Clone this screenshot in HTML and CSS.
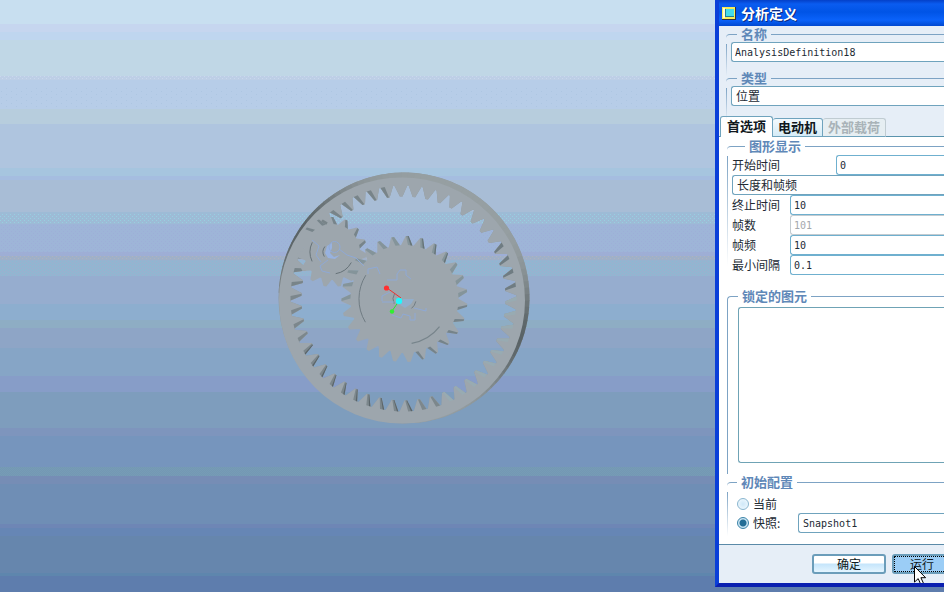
FILE: index.html
```html
<!DOCTYPE html>
<html lang="zh-CN">
<head>
<meta charset="utf-8">
<title>分析定义</title>
<link rel="stylesheet" href="styles.css">
</head>
<body>
<main class="workspace">
  <section class="viewport" aria-label="模型">
    <svg class="scene" viewBox="0 0 715 592" preserveAspectRatio="xMinYMin slice">
      <defs>
        <pattern id="mist" width="4" height="4" patternUnits="userSpaceOnUse">
          <path d="M0 0h1v1h-1zM2 2h1v1h-1z" fill="#cbd7ee"/>
        </pattern>
        <pattern id="aqua" width="4" height="4" patternUnits="userSpaceOnUse">
          <path d="M0 0h1v1h-1zM2 2h1v1h-1z" fill="#98cfe0"/>
        </pattern>
        <pattern id="violet" width="4" height="4" patternUnits="userSpaceOnUse">
          <path d="M1 1h1v1h-1zM3 3h1v1h-1z" fill="#9eaed8"/>
        </pattern>
        <pattern id="sand" width="4" height="4" patternUnits="userSpaceOnUse">
          <path d="M0 0h1v1h-1zM2 2h1v1h-1z" fill="#aeb2c0"/>
        </pattern>
        <pattern id="teal" width="4" height="3" patternUnits="userSpaceOnUse">
          <path d="M0 0h1v1h-1zM2 2h1v1h-1z" fill="#8abbd2"/>
        </pattern>
        <pattern id="moss" width="2" height="2" patternUnits="userSpaceOnUse">
          <path d="M0 0h1v1h-1zM1 1h1v1h-1z" fill="#769db5"/>
        </pattern>
        <pattern id="sky" width="10" height="6" patternUnits="userSpaceOnUse">
          <path d="M1 1h1v1h-1zM6 4h1v1h-1z" fill="#adc6e2"/>
        </pattern>
      </defs>
      <g shape-rendering="crispEdges">
        <rect y="76" width="715" height="4" fill="url(#mist)"/>
        <rect y="88" width="715" height="21" fill="url(#sky)"/>
        <rect y="213" width="715" height="11" fill="url(#aqua)"/>
        <rect y="225" width="715" height="31" fill="url(#violet)"/>
        <rect y="256" width="715" height="4" fill="url(#sand)"/>
        <rect y="261" width="715" height="15" fill="url(#teal)"/>
        <rect y="467" width="715" height="9" fill="url(#moss)"/>
      </g>
      <g id="gears"></g>
    </svg>
  </section>

  <form class="dialog" onsubmit="return false">
    <header class="titlebar">
      <svg class="app-icon" viewBox="0 0 14 13" aria-hidden="true">
        <path d="M0 0h14v13H0z" fill="#2a3040"/>
        <path d="M0 0h13v12H0z" fill="#f6ec58"/>
        <path d="M1 1h2v10H1z" fill="#fffbd0"/>
        <path d="M3 2h9v8H3z" fill="#1e7f96"/>
        <path d="M4 2h8v7H4z" fill="#43dcea"/>
      </svg>
      <h1>分析定义</h1>
    </header>

    <div class="top-fields">
      <fieldset class="group">
        <legend><label for="name">名称</label></legend>
        <input id="name" class="field mono" value="AnalysisDefinition18">
      </fieldset>
      <fieldset class="group">
        <legend><label for="type">类型</label></legend>
        <select id="type" class="field"><option>位置</option></select>
      </fieldset>
    </div>

    <nav class="tabs" role="tablist">
      <button type="button" role="tab" aria-selected="true" class="tab active">首选项</button>
      <button type="button" role="tab" class="tab">电动机</button>
      <button type="button" role="tab" class="tab" disabled>外部载荷</button>
    </nav>

    <div class="panel">
      <fieldset class="group display">
        <legend>图形显示</legend>
        <div class="row start"><label for="start">开始时间</label><input id="start" class="field mono" value="0"></div>
        <select class="field mode" aria-label="模式"><option>长度和帧频</option></select>
        <div class="row"><label for="end">终止时间</label><input id="end" class="field mono" value="10"></div>
        <div class="row"><label for="count">帧数</label><input id="count" class="field mono" value="101" disabled></div>
        <div class="row"><label for="rate">帧频</label><input id="rate" class="field mono" value="10"></div>
        <div class="row"><label for="step">最小间隔</label><input id="step" class="field mono" value="0.1"></div>
      </fieldset>

      <fieldset class="group locked">
        <legend>锁定的图元</legend>
        <div class="list" role="listbox" aria-label="锁定的图元"></div>
      </fieldset>

      <fieldset class="group initial">
        <legend>初始配置</legend>
        <label class="choice"><input type="radio" name="init">当前</label>
        <div class="snapshot">
          <label class="choice"><input type="radio" name="init" checked>快照:</label>
          <input class="field mono" aria-label="快照" value="Snapshot1">
        </div>
      </fieldset>
    </div>

    <footer class="actions">
      <button type="button" class="btn">确定</button>
      <button type="button" class="btn run">运行
        <svg class="pointer" viewBox="0 0 12 20" aria-hidden="true">
          <path d="M.5 .5v15.600l3.700-3.500 3 6.800 2.700-1.200-3-6.500h4.700z" fill="#fff" stroke="#000"/>
        </svg>
      </button>
    </footer>
  </form>
</main>
<script src="gears.js"></script>
</body>
</html>
```
FILE: styles.css
```css
* { box-sizing: border-box; }

body {
  margin: 0;
  padding: 0 2px 3px 0;
  background: #fff;
  font: 12px/16px "Noto Sans CJK SC", sans-serif;
  color: #222a33;
  overflow: hidden;
}

.workspace {
  display: flex;
  align-items: flex-start;
  min-height: calc(100vh - 3px);
  background: linear-gradient(
    #c8dff0 24px, #c6d6ef 24px 32px, #bfd6ef 32px 40px, #c0d7e6 40px 76px,
    #bdcfe6 76px 80px, #b7cde8 80px 109px, #b7cddd 109px 124px, #afc5df 124px 168px,
    #a6c5df 168px 176px, #a5bde0 176px 180px, #a8bdd6 180px 212px, #9dbbd6 212px 224px,
    #9eb5d8 224px 252px, #9eaed5 252px 256px, #9fb0c8 256px 260px, #96b3d0 260px 276px,
    #96adcf 276px 304px, #8daecf 304px 320px, #8eadc4 320px 328px, #8ea5c6 328px 348px,
    #86a5c6 348px 376px, #879dc8 376px 392px, #7e9dbd 392px 428px, #7e95bd 428px 436px,
    #7695bd 436px 467px, #7497b4 467px 476px, #768db5 476px 484px, #6f8eb5 484px 524px,
    #6e86b5 524px 528px, #6686b5 528px 536px, #6686ad 536px 573px, #5e86ad 573px 576px,
    #5e7dad 576px);
}

.viewport { flex: 1; min-width: 0; align-self: stretch; }
.scene { display: block; width: 100%; }

.dialog {
  flex: 0 0 229px;
  border: solid #0a3fd8;
  border-width: 0 0 4px 4px;
  border-color: #0a1fb0 #0a3fd8 #0a1fb0 #0a3fd8;
  background: #e6eef7;
  overflow: hidden;
}

.titlebar {
  display: flex;
  align-items: center;
  gap: 5px;
  height: 26px;
  padding-left: 3px;
  background: linear-gradient(#0440c8, #0a5cf0 4px, #0054e6 12px, #0a62fa 20px, #0048d0);
}
.titlebar h1 {
  margin: 0;
  font-size: 14px;
  line-height: 20px;
  font-weight: 700;
  color: #fff;
  text-shadow: 1px 1px 0 #0a2a80;
}
.app-icon { width: 14px; height: 13px; }

.group {
  position: relative;
  min-width: 0;
  margin: 0;
  padding: 0;
  border: 1px solid #7da3c4;
  border-width: 1px 0 0 1px;
  border-radius: 4px 0 0 0;
}
.group legend {
  padding: 0 4px;
  font-size: 13px;
  line-height: 16px;
  font-weight: 700;
  color: #5f88b8;
}

.top-fields { padding-left: 7px; }
.top-fields .group { height: 44px; padding-left: 5px; border-left: 0; }
.top-fields legend { margin-left: 6px; }

.field {
  display: block;
  width: 100%;
  min-width: 0;
  height: 20px;
  margin: 0;
  padding: 0 4px;
  border: 1px solid #6fa3bd;
  border-right: 0;
  border-radius: 3px 0 0 3px;
  background: #fff;
  color: #222a33;
  font: 12px/16px "Noto Sans CJK SC", sans-serif;
  appearance: none;
  outline: 0;
}
.field.mono { padding: 0 3px; font-family: "DejaVu Sans Mono", monospace; font-size: 10px; }
.field:disabled { border-color: #c3cbd0; color: #a4a8ac; }
.snapshot .field.mono { padding-left: 4px; }

.tabs {
  display: flex;
  align-items: flex-end;
  height: 23px;
  padding-left: 1px;
  box-shadow: inset 0 -1px #5a93ad;
}
.tab {
  height: 19px;
  padding: 0 5px 2px;
  border: 1px solid #6fa3bd;
  border-left-width: 0;
  border-radius: 3px 3px 0 0;
  background: linear-gradient(#f4fafe, #d5ecf7);
  font: 700 13px/16px "Noto Sans CJK SC", sans-serif;
  color: #101820;
}
.tab.active { height: 21px; padding: 0 6px 2px; border-width: 1px 1px 0; background: #fff; }
.tab:disabled { padding: 0 5px 2px; border-color: #c0ccd2 #c0ccd2 #6fa3bd; background: #e6eef2; color: #a9b3b8; }

.panel {
  padding: 1px 0 0 8px;
  background: #fff;
  border-bottom: 1px solid #5a8aa8;
}

.display { height: 150px; padding: 1px 0 0 5px; border-left: 0; }
.top-fields .group::before,
.display::before,
.initial::before {
  content: "";
  position: absolute;
  left: 0;
  top: 2px;
  width: 1px;
  height: 110px;
  background: linear-gradient(#7da3c4, transparent);
}
.top-fields .group::before { height: 32px; }
.display legend { margin-left: 13px; }
.row { display: grid; grid-template-columns: 58px 1fr; align-items: center; height: 20px; }
.row.start { grid-template-columns: 104px 1fr; }
.row .field { border-color: #6fb0cf; }
.row .field:disabled { border-color: #c3cbd0; }

.locked { height: 186px; padding: 3px 0 0 10px; }
.list { height: 156px; border: 1px solid #6fa3b5; border-right: 0; border-radius: 3px 0 0 3px; background: #fff; }

.initial { height: 70px; padding: 5px 0 0 10px; border-left: 0; }
.initial::before { height: 44px; }
.locked legend,
.initial legend { margin-left: 0; }
.choice { display: flex; align-items: center; gap: 4px; height: 18px; }
.choice input {
  width: 12px;
  height: 12px;
  margin: 0;
  border: 1px solid #8ab6cf;
  border-radius: 50%;
  background: radial-gradient(#cfe8f8, #f4fbff);
  appearance: none;
}
.choice input:checked { border-color: #3b83a8; background: radial-gradient(#246e96 0 3px, #cbe6f4 4px); }
.snapshot { display: grid; grid-template-columns: 61px 1fr; align-items: center; height: 18px; }

.actions { display: flex; gap: 6px; height: 38px; padding: 9px 0 0 93px; }
.btn {
  position: relative;
  flex: 0 0 74px;
  height: 20px;
  padding: 0;
  border: 2px solid #6b9dba;
  border-radius: 3px;
  background: linear-gradient(#fff 0 7px, #c5e5fb 8px, #e4f5ff);
  font: 12px/16px "Noto Sans CJK SC", sans-serif;
  color: #101820;
}
.btn.run { flex-basis: 60px; background: #9bcdf6; outline: 1px dotted #000; outline-offset: -3px; }
.pointer { position: absolute; left: 20px; top: 10px; width: 12px; height: 20px; }
```
FILE: gears.js
```js
const NS = 'http://www.w3.org/2000/svg';
const root = document.getElementById('gears');

function add(tag, attrs) {
  const el = document.createElementNS(NS, tag);
  for (const key in attrs) el.setAttribute(key, attrs[key]);
  root.appendChild(el);
}
function polar(cx, cy, r, a) {
  return (cx + r * Math.cos(a)).toFixed(1) + ' ' + (cy + r * Math.sin(a)).toFixed(1);
}

// Toothed outline: each tooth goes root, tip, tip, root.
function toothed(g) {
  const pts = [];
  const step = 2 * Math.PI / g.n;
  for (let i = 0; i < g.n; i++) {
    const a = g.phase + i * step;
    pts.push(polar(g.x, g.y, g.foot, a - step * 0.45));
    pts.push(polar(g.x, g.y, g.tip, a - step * 0.1));
    pts.push(polar(g.x, g.y, g.tip, a + step * 0.1));
    pts.push(polar(g.x, g.y, g.foot, a + step * 0.45));
  }
  return 'M' + pts.join('L') + 'Z';
}

// Shaded flank on one side of each tooth between two angles.
function flanks(g, from, to, color, width) {
  const step = 2 * Math.PI / g.n;
  for (let i = 0; i < g.n; i++) {
    const a = (g.phase + i * step + 4 * Math.PI) % (2 * Math.PI);
    if (a < from || a > to) continue;
    const p = [
      polar(g.x, g.y, g.tip, a + g.side * step * 0.1),
      polar(g.x, g.y, g.foot, a + g.side * step * 0.45),
      polar(g.x, g.y, g.foot, a + g.side * step * (0.45 - width)),
      polar(g.x, g.y, g.tip, a + g.side * step * (0.1 - width / 2))
    ];
    add('path', { d: 'M' + p.join('L') + 'Z', fill: color });
  }
}

function arc(cx, cy, r, a0, a1, color, w) {
  add('path', {
    d: `M${polar(cx, cy, r, a0)}A${r} ${r} 0 0 1 ${polar(cx, cy, r, a1)}`,
    fill: 'none', stroke: color, 'stroke-width': w
  });
}

const ring = { x: 403.5, y: 298.5, n: 50, foot: 113, tip: 102, phase: 0.04, side: -1 };
const sun = { x: 404.5, y: 299, n: 27, foot: 54, tip: 63, phase: 0.1, side: 1 };
const planet = { x: 332, y: 252, n: 15, foot: 28, tip: 35, phase: 0.1, side: 1 };

// Ring rim, shaded by direction, then its front face.
const circle = (x, y, r) => `M${x - r} ${y}a${r} ${r} 0 1 0 ${2 * r} 0a${r} ${r} 0 1 0 ${-2 * r} 0Z`;
add('path', { d: circle(404, 298, 125.5) + toothed(ring), fill: '#8f999d', 'fill-rule': 'evenodd' });
for (let i = 0; i < 88; i++) {
  const a = -3.1 + i * 0.052;
  const dark = Math.max(Math.exp(-((a + 2.6) ** 2) / 0.25), Math.exp(-((a - 0.3) ** 2) / 0.2));
  const v = Math.round(150 - dark * 60);
  arc(404, 298, 122.5, a, a + 0.056, `rgb(${v},${v + 9},${v + 12})`, 6);
}
add('path', { d: circle(402, 300.5, 123) + toothed(ring), fill: '#9da6ad', 'fill-rule': 'evenodd' });
flanks(ring, 0, 1.2, '#98abb2', 0.28);
flanks(ring, 1.2, 3.2, '#7c878c', 0.3);
flanks(ring, 1.5, 2.8, '#59646a', 0.1);
flanks(ring, 3.2, 4.6, '#788489', 0.3);
flanks(ring, 5.7, 6.29, '#6f7c82', 0.3);

add('path', { d: toothed(planet), fill: '#9da6ad' });
flanks(planet, 3.5, 6.29, '#77848a', 0.3);
add('path', { d: toothed(sun), fill: '#9da6ad' });
flanks(sun, 3, 6.29, '#84949a', 0.35);
flanks(sun, 4.6, 5.6, '#667479', 0.14);
flanks(sun, 0, 1.4, '#75838a', 0.25);

arc(404, 299, 45, 2.6, 3.7, '#707c83', 1);
arc(404, 299, 45, 0.66, 1.4, '#77848b', 1.2);
arc(404, 299, 11, 2.7, 3.7, '#707c83', 1);
arc(404, 299, 12, 0.2, 0.9, '#707c83', 1);
arc(332, 252, 22, 2.7, 3.6, '#667278', 1);
arc(332, 252, 22, 0.5, 1.4, '#667278', 1);
arc(332, 252, 9, 2.6, 3.8, '#667278', 1);

// Bores and hidden-edge traces.
add('path', { d: 'M327 246l5-3v5l-2 5 4 4 6-2-5 4-7-1-3-5z', fill: '#98b2df' });
add('path', { d: 'M403 299h11l-3 5-6 4-5-3z', fill: '#93aecb' });
add('circle', { cx: 334.5, cy: 247, r: 5.5, fill: 'none', stroke: '#8fa9d5', 'stroke-width': 1 });
add('path', {
  d: 'M312 240l7 6-3 9 5 7M328 260l-8 6 2 5 8 2M339 249l8 6 9 3 8 8M368 274v-5l9-2 3 7M387 280h10v-6l3-4h6v5l5 4M382 301v-5l8-4M382 302h12M392 315l9 3 2-4 7 2v4h5v-7M414 308l12 3v-3',
  fill: 'none', stroke: '#8fa9d5', 'stroke-width': 1
});

add('path', { d: 'M387 288l14 10', stroke: '#f03030', 'stroke-width': 1 });
add('path', { d: 'M399 301l-7 10', stroke: '#30e030', 'stroke-width': 1 });
add('circle', { cx: 386.5, cy: 288, r: 2.6, fill: '#ff3030' });
add('circle', { cx: 392, cy: 311.5, r: 2.2, fill: '#30f030' });
add('circle', { cx: 399, cy: 301, r: 3.2, fill: '#20f8ff' });
```
